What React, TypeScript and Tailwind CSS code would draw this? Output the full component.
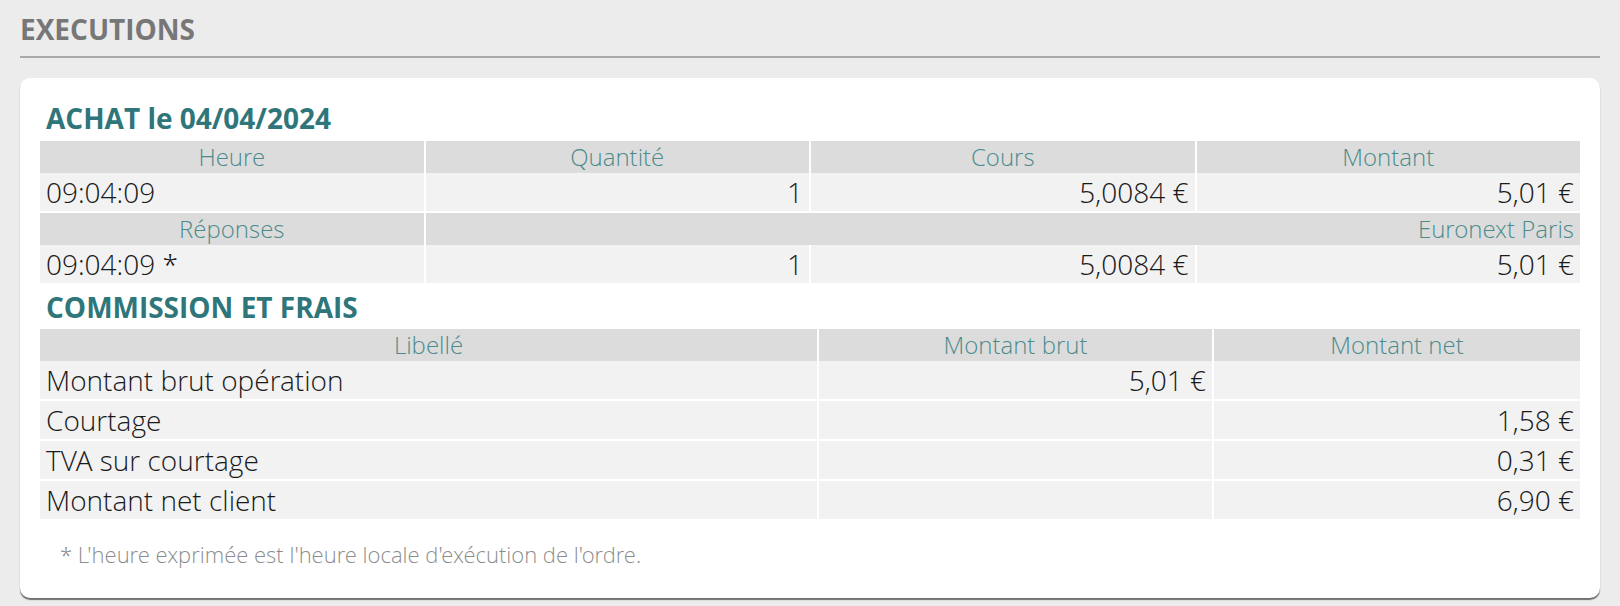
const font = { fontFamily: '"Open Sans", "Noto Sans", sans-serif' };
const light = { fontFamily: '"Open Sans Light", "Open Sans", "Noto Sans", sans-serif' };

type Cell = { text: string; align?: "left" | "right" | "center"; span?: number };

const alignClass = (a?: string) =>
  a === "right" ? "text-right" : a === "center" ? "text-center" : "text-left";

function HeadRow({ cells }: { cells: Cell[] }) {
  return (
    <>
      {cells.map((c, i) => (
        <div
          key={i}
          style={light}
          className={`h-[32px] bg-[#dcdcdc] px-[6px] text-[24px] leading-[32px] font-light text-[#4b8b8b] whitespace-nowrap ${alignClass(
            c.align ?? "center"
          )} ${c.span === 3 ? "col-span-3" : ""}`}
        >
          {c.text}
        </div>
      ))}
    </>
  );
}

function DataRow({ cells }: { cells: Cell[] }) {
  return (
    <>
      {cells.map((c, i) => (
        <div
          key={i}
          style={light}
          className={`h-[38px] bg-[#f2f2f2] px-[6px] text-[28px] leading-[38px] font-light text-[#1a1a1a] whitespace-nowrap ${alignClass(
            c.align
          )}`}
        >
          {c.text}
        </div>
      ))}
    </>
  );
}

export default function App() {
  return (
    <div className="min-h-[606px] w-full bg-[#ececec] px-[20px] pt-[10px]" style={font}>
      <div className="border-b-2 border-[#a9a9a9] pb-[8px]">
        <h1 className="text-[28px] leading-[38px] font-bold text-[#777777]">EXECUTIONS</h1>
      </div>

      <div className="mt-[20px] rounded-[10px] bg-white px-[20px] pt-[21px] pb-[29px] shadow-[0_2px_1px_#707070]">
        <h2 className="px-[6px] text-[28px] leading-[38px] font-bold text-[#2f767a]">
          ACHAT le 04/04/2024
        </h2>

        <div className="mt-[4px] grid grid-cols-4 gap-x-[2px]">
          <HeadRow
            cells={[{ text: "Heure" }, { text: "Quantité" }, { text: "Cours" }, { text: "Montant" }]}
          />
          <DataRow
            cells={[
              { text: "09:04:09" },
              { text: "1", align: "right" },
              { text: "5,0084 €", align: "right" },
              { text: "5,01 €", align: "right" },
            ]}
          />
          <div className="col-span-4 h-[2px]" />
          <HeadRow
            cells={[{ text: "Réponses" }, { text: "Euronext Paris", align: "right", span: 3 }]}
          />
          <DataRow
            cells={[
              { text: "09:04:09 *" },
              { text: "1", align: "right" },
              { text: "5,0084 €", align: "right" },
              { text: "5,01 €", align: "right" },
            ]}
          />
        </div>

        <h2 className="mt-[5px] px-[6px] text-[28px] leading-[38px] font-bold text-[#2f767a]">
          COMMISSION ET FRAIS
        </h2>

        <div className="mt-[3px] grid grid-cols-[777px_393px_1fr] gap-x-[2px]">
          <HeadRow
            cells={[{ text: "Libellé" }, { text: "Montant brut" }, { text: "Montant net" }]}
          />
          <DataRow
            cells={[{ text: "Montant brut opération" }, { text: "5,01 €", align: "right" }, { text: "" }]}
          />
          <div className="col-span-3 h-[2px]" />
          <DataRow cells={[{ text: "Courtage" }, { text: "" }, { text: "1,58 €", align: "right" }]} />
          <div className="col-span-3 h-[2px]" />
          <DataRow
            cells={[{ text: "TVA sur courtage" }, { text: "" }, { text: "0,31 €", align: "right" }]}
          />
          <div className="col-span-3 h-[2px]" />
          <DataRow
            cells={[{ text: "Montant net client" }, { text: "" }, { text: "6,90 €", align: "right" }]}
          />
        </div>

        <p
          style={light}
          className="mt-[20px] pl-[20px] text-[22px] leading-[30px] font-light text-[#8c8c8c]"
        >
          * L'heure exprimée est l'heure locale d'exécution de l'ordre.
        </p>
      </div>
    </div>
  );
}
